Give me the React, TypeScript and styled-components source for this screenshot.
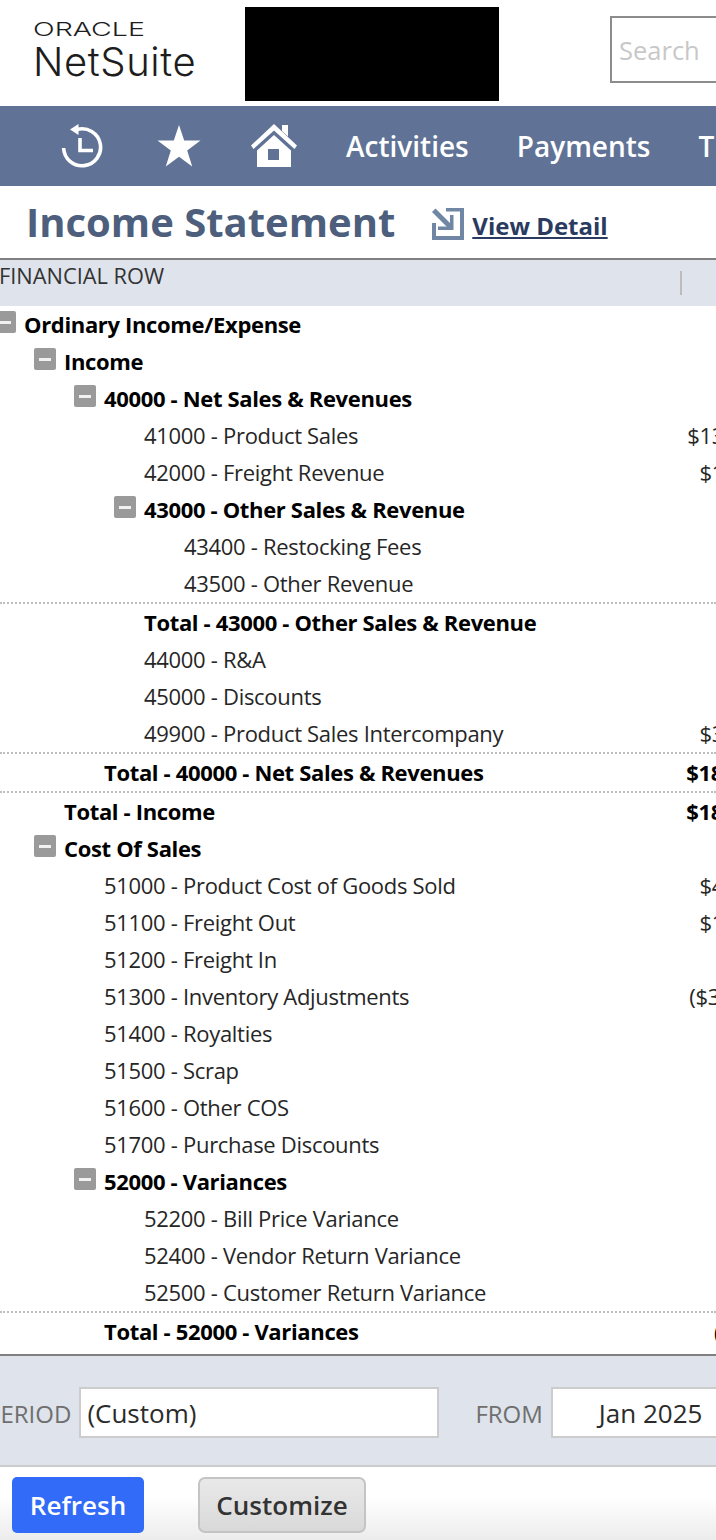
import React from "react";
import styled, { createGlobalStyle } from "styled-components";

const GlobalStyle = createGlobalStyle`
  html, body {
    margin: 0;
    padding: 0;
    background: #fff;
    font-family: "Open Sans", "Liberation Sans", sans-serif;
  }
`;

const Page = styled.div`
  width: 716px;
  height: 1540px;
  overflow: hidden;
  display: flex;
  flex-direction: column;
`;

/* top header */
const Header = styled.header`
  height: 106px;
  flex: none;
  display: flex;
  align-items: flex-start;
  overflow: hidden;
`;

const Logo = styled.div`
  width: 245px;
  flex: none;
  padding: 18px 0 0 33px;
  box-sizing: border-box;
  color: #1d1d1d;
`;

const LogoTop = styled.div`
  font-family: "Inter", sans-serif;
  font-weight: 300;
  font-size: 19px;
  line-height: 23px;
  transform: scaleX(1.5);
  transform-origin: left center;
`;

const LogoName = styled.div`
  font-family: "Inter", sans-serif;
  font-weight: 300;
  font-size: 40px;
  line-height: 42px;
  letter-spacing: 0.6px;
`;

const Redacted = styled.div`
  width: 254px;
  height: 94px;
  flex: none;
  margin-top: 7px;
  background: #000;
`;

const SearchBox = styled.div`
  flex: none;
  width: 200px;
  height: 67px;
  margin: 16px 0 0 111px;
  padding-left: 7px;
  box-sizing: border-box;
  border: 2px solid #8c8c8c;
  color: #c8c8c8;
  font-size: 25.500px;
  line-height: 64px;
`;

/* nav bar */
const Nav = styled.nav`
  height: 80px;
  flex: none;
  background: #607396;
  display: flex;
  align-items: center;
  overflow: hidden;
  color: #fff;
`;

const NavIcon = styled.svg<{ $left: number }>`
  flex: none;
  margin-left: ${(p) => p.$left}px;
  display: block;
`;

const NavLink = styled.span<{ $left: number }>`
  flex: none;
  margin-left: ${(p) => p.$left}px;
  font-size: 28px;
  font-weight: 600;
  line-height: 80px;
`;

/* title */
const TitleRow = styled.div`
  height: 72px;
  flex: none;
  display: flex;
  align-items: center;
  padding-left: 26px;
`;

const Title = styled.h1`
  margin: 0;
  font-size: 40px;
  font-weight: 700;
  color: #4d5f7c;
  line-height: 72px;
`;

const DetailIcon = styled.svg`
  margin: 4px 0 0 37px;
  flex: none;
`;

const DetailLink = styled.a`
  margin: 6px 0 0 7px;
  font-size: 24px;
  font-weight: 700;
  color: #2a3b5f;
  text-decoration: underline;
`;

/* report table */
const ColumnHead = styled.div`
  height: 46px;
  flex: none;
  background: #dfe3ec;
  border-top: 2px solid #808080;
  display: flex;
  justify-content: space-between;
  color: #333;
  font-size: 21.800px;
  line-height: 32px;
  padding: 0 34px 0 0;
`;

const HeadLabel = styled.span`
  margin: 0 0 0 -1px;
`;

const HeadDivider = styled.span`
  width: 2px;
  height: 24px;
  margin-top: 11px;
  background: #bcbcbc;
`;

const Rows = styled.div`
  height: 1048px;
  flex: none;
  overflow: hidden;
`;

const Row = styled.div<{ $total?: boolean }>`
  height: 37px;
  display: flex;
  border-top: ${(p) => (p.$total ? "2px dotted #bdbdbd" : "none")};
`;

const Indent = styled.div<{ $x: number }>`
  margin-left: ${(p) => p.$x}px;
  display: flex;
  flex: 1;
  min-width: 0;
`;

const Toggle = styled.span`
  flex: none;
  width: 22px;
  height: 22px;
  margin: 5px 8px 0 0;
  border-radius: 2px;
  background: #9a9a9a;
  display: flex;
  align-items: center;
  justify-content: center;
  &::before {
    content: "";
    width: 12px;
    height: 3px;
    background: #f1f1f1;
  }
`;

const Label = styled.span<{ $bold?: boolean }>`
  font-size: 22px;
  line-height: 37px;
  white-space: nowrap;
  font-weight: ${(p) => (p.$bold ? 700 : 400)};
  letter-spacing: ${(p) => (p.$bold ? -0.34 : -0.3)}px;
  color: ${(p) => (p.$bold ? "#000" : "#262626")};
`;

const Amount = styled(Label)<{ $over: number }>`
  margin-left: auto;
  margin-right: -${(p) => p.$over}px;
  text-align: right;
`;

/* filter panel */
const FilterPanel = styled.div`
  height: 113px;
  flex: none;
  box-sizing: border-box;
  background: #dfe3ec;
  border-top: 2px solid #808080;
  border-bottom: 2px solid #cccccc;
  display: flex;
  align-items: center;
  overflow: hidden;
  padding-top: 4px;
`;

const FilterLabel = styled.span<{ $left: number }>`
  flex: none;
  margin: 2px 0 0 ${(p) => p.$left}px;
  font-size: 24px;
  color: #6f6f6f;
`;

const Field = styled.div<{ $width: number; $pad: number }>`
  flex: none;
  box-sizing: border-box;
  width: ${(p) => p.$width}px;
  height: 51px;
  margin-left: 8px;
  padding-left: ${(p) => p.$pad}px;
  background: #fff;
  border: 2px solid #cccccc;
  font-size: 26px;
  line-height: 49px;
  color: #2b2b2b;
`;

/* bottom buttons */
const Actions = styled.div`
  flex: 1;
  display: flex;
  align-items: flex-start;
  gap: 54px;
  padding: 10px 0 0 12px;
  background: linear-gradient(#ffffff 40%, #ececec);
`;

const Button = styled.button<{ $primary?: boolean }>`
  height: 56px;
  box-sizing: border-box;
  padding: 0;
  width: ${(p) => (p.$primary ? 132 : 168)}px;
  border-radius: ${(p) => (p.$primary ? 5 : 7)}px;
  border: ${(p) => (p.$primary ? "none" : "2px solid #c4c4c4")};
  background: ${(p) =>
    p.$primary ? "#316bf7" : "linear-gradient(#e9e9e9, #d9d9d9)"};
  color: ${(p) => (p.$primary ? "#fff" : "#333")};
  font-family: inherit;
  font-size: 26px;
  font-weight: 600;
`;

type ReportRow = {
  level: number;
  label: string;
  bold?: boolean;
  toggle?: boolean;
  total?: boolean;
  amount?: string;
  over?: number;
};

const rows: ReportRow[] = [
  { level: 0, label: "Ordinary Income/Expense", bold: true, toggle: true },
  { level: 1, label: "Income", bold: true, toggle: true },
  { level: 2, label: "40000 - Net Sales & Revenues", bold: true, toggle: true },
  { level: 3, label: "41000 - Product Sales", amount: "$13" },
  { level: 3, label: "42000 - Freight Revenue", amount: "$1" },
  { level: 3, label: "43000 - Other Sales & Revenue", bold: true, toggle: true },
  { level: 4, label: "43400 - Restocking Fees" },
  { level: 4, label: "43500 - Other Revenue" },
  { level: 3, label: "Total - 43000 - Other Sales & Revenue", bold: true, total: true },
  { level: 3, label: "44000 - R&A" },
  { level: 3, label: "45000 - Discounts" },
  { level: 3, label: "49900 - Product Sales Intercompany", amount: "$3" },
  { level: 2, label: "Total - 40000 - Net Sales & Revenues", bold: true, total: true, amount: "$18", over: 7 },
  { level: 1, label: "Total - Income", bold: true, total: true, amount: "$18", over: 7 },
  { level: 1, label: "Cost Of Sales", bold: true, toggle: true },
  { level: 2, label: "51000 - Product Cost of Goods Sold", amount: "$4" },
  { level: 2, label: "51100 - Freight Out", amount: "$1" },
  { level: 2, label: "51200 - Freight In" },
  { level: 2, label: "51300 - Inventory Adjustments", amount: "($3", over: 4 },
  { level: 2, label: "51400 - Royalties" },
  { level: 2, label: "51500 - Scrap" },
  { level: 2, label: "51600 - Other COS" },
  { level: 2, label: "51700 - Purchase Discounts" },
  { level: 2, label: "52000 - Variances", bold: true, toggle: true },
  { level: 3, label: "52200 - Bill Price Variance" },
  { level: 3, label: "52400 - Vendor Return Variance" },
  { level: 3, label: "52500 - Customer Return Variance" },
  { level: 2, label: "Total - 52000 - Variances", bold: true, total: true, amount: "(", over: 5 },
];

const HistoryIcon = () => (
  <NavIcon $left={60} width="44" height="44" viewBox="0 0 44 44" fill="none">
    <path d="M17 5.500A18.500 18.500 0 1 1 3.600 24" stroke="#fff" strokeWidth="3.600" />
    <path d="M18.500 0v11L10 5.500z" fill="#fff" />
    <path d="M20 14v12.500h13" stroke="#fff" strokeWidth="3.600" />
  </NavIcon>
);

const StarIcon = () => (
  <NavIcon $left={53} width="44" height="42" viewBox="0 0 44 42">
    <path
      d="M22 0l5.200 15.600H43.500L30.200 25.500 35.200 41.500 22 31.700 8.800 41.500 13.800 25.500 0.500 15.600H16.800z"
      fill="#fff"
    />
  </NavIcon>
);

const HomeIcon = () => (
  <NavIcon $left={50} width="46" height="44" viewBox="0 0 46 44">
    <path d="M23 0L46 21.500 43.500 25 23 6.500 2.500 25 0 21.500z" fill="#fff" />
    <path d="M31 1h6v11.500l-6-5.500z" fill="#fff" />
    <path
      fillRule="evenodd"
      d="M23 11L40 26.500V43H6V26.500zM17 25v11h11V25z"
      fill="#fff"
    />
  </NavIcon>
);

const App = () => {
  return (
    <Page>
      <GlobalStyle />
      <Header>
        <Logo>
          <LogoTop>ORACLE</LogoTop>
          <LogoName>NetSuite</LogoName>
        </Logo>
        <Redacted />
        <SearchBox>Search</SearchBox>
      </Header>

      <Nav>
        <HistoryIcon />
        <StarIcon />
        <HomeIcon />
        <NavLink $left={49}>Activities</NavLink>
        <NavLink $left={48}>Payments</NavLink>
        <NavLink $left={48}>T</NavLink>
      </Nav>

      <TitleRow>
        <Title>Income Statement</Title>
        <DetailIcon width="33" height="33" viewBox="0 0 33 33" fill="#6f87a5">
          <path d="M0 15h4v13h24V3.500H14V0h18v32H0z" />
          <path d="M3.500 0.500L21 18l-3.500 3.500L0 4z" />
          <path d="M18 7h3.500v15H6v-3.500h12z" />
        </DetailIcon>
        <DetailLink>View Detail</DetailLink>
      </TitleRow>

      <ColumnHead>
        <HeadLabel>FINANCIAL ROW</HeadLabel>
        <HeadDivider />
      </ColumnHead>

      <Rows>
        {rows.map((row) => (
          <Row key={row.label} $total={row.total}>
            <Indent $x={row.level * 40 + (row.toggle ? -6 : 24)}>
              {row.toggle && <Toggle />}
              <Label $bold={row.bold}>{row.label}</Label>
              {row.amount && (
                <Amount $bold={row.bold} $over={row.over ?? 8}>
                  {row.amount}
                </Amount>
              )}
            </Indent>
          </Row>
        ))}
      </Rows>

      <FilterPanel>
        <FilterLabel $left={-14}>PERIOD</FilterLabel>
        <Field $width={360} $pad={6}>(Custom)</Field>
        <FilterLabel $left={36}>FROM</FilterLabel>
        <Field $width={200} $pad={46}>Jan 2025</Field>
      </FilterPanel>

      <Actions>
        <Button $primary>Refresh</Button>
        <Button>Customize</Button>
      </Actions>
    </Page>
  );
};

export default App;
